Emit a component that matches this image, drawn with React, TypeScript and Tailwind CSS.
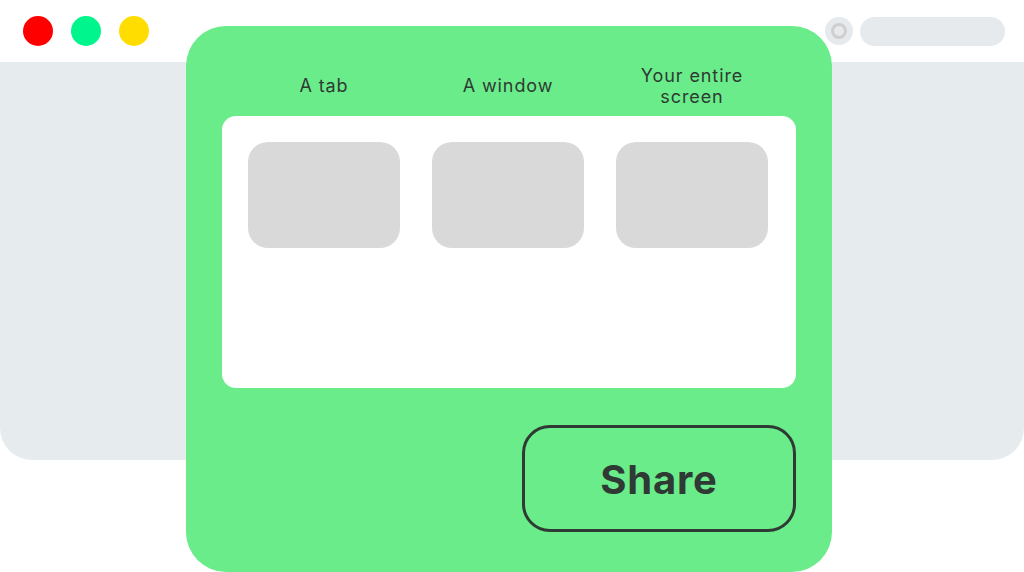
import React from 'react'

const sources = ['A tab', 'A window', 'Your entire screen']

function TrafficLights() {
  return (
    <div className="flex items-center gap-[18px] pl-[23px]">
      <span className="block h-[30px] w-[30px] rounded-full bg-[#ff0000]" />
      <span className="block h-[30px] w-[30px] rounded-full bg-[#00f58c]" />
      <span className="block h-[30px] w-[30px] rounded-full bg-[#ffdd00]" />
    </div>
  )
}

function AddressBar() {
  return (
    <div className="flex items-center gap-[7px] pr-[19px]">
      <span className="flex h-[28px] w-[28px] items-center justify-center rounded-full bg-[#e6eaed]">
        <span className="block h-[16px] w-[16px] rounded-full border-[3px] border-[#cfcfcf]" />
      </span>
      <span className="block h-[29px] w-[145px] rounded-full bg-[#e6eaed]" />
    </div>
  )
}

function ShareDialog() {
  return (
    <div className="absolute left-[186px] top-[26px] flex h-[546px] w-[646px] flex-col rounded-[40px] bg-[#6aec8a] px-[36px] pt-[28px] text-[#2e3a33]">
      <div className="grid h-[62px] grid-cols-3 items-center gap-[32px] pl-[26px] pr-[28px]">
        {sources.map((s) => (
          <div key={s} className="pt-[1px] text-center text-[18px] leading-[21px] tracking-[0.05em]">
            {s}
          </div>
        ))}
      </div>

      <div className="grid h-[272px] grid-cols-3 content-start gap-[32px] rounded-[14px] bg-white pl-[26px] pr-[28px] pt-[26px]">
        {sources.map((s) => (
          <div key={s} className="h-[106px] rounded-[20px] bg-[#d9d9d9]" />
        ))}
      </div>

      <div className="mt-[37px] flex justify-end">
        <button className="flex h-[107px] w-[274px] items-center justify-center rounded-[28px] border-[3px] border-[#2e3a33] pt-[2px] text-[40px] font-bold tracking-[0.02em]">
          Share
        </button>
      </div>
    </div>
  )
}

export default function App() {
  return (
    <div className="relative h-[572px] w-[1024px] overflow-hidden bg-white" style={{ fontFamily: 'Inter, "Noto Sans", sans-serif' }}>
      <div className="flex h-[62px] items-center justify-between">
        <TrafficLights />
        <AddressBar />
      </div>
      <div className="h-[398px] rounded-b-[32px] bg-[#e6ebee]" />
      <ShareDialog />
    </div>
  )
}
